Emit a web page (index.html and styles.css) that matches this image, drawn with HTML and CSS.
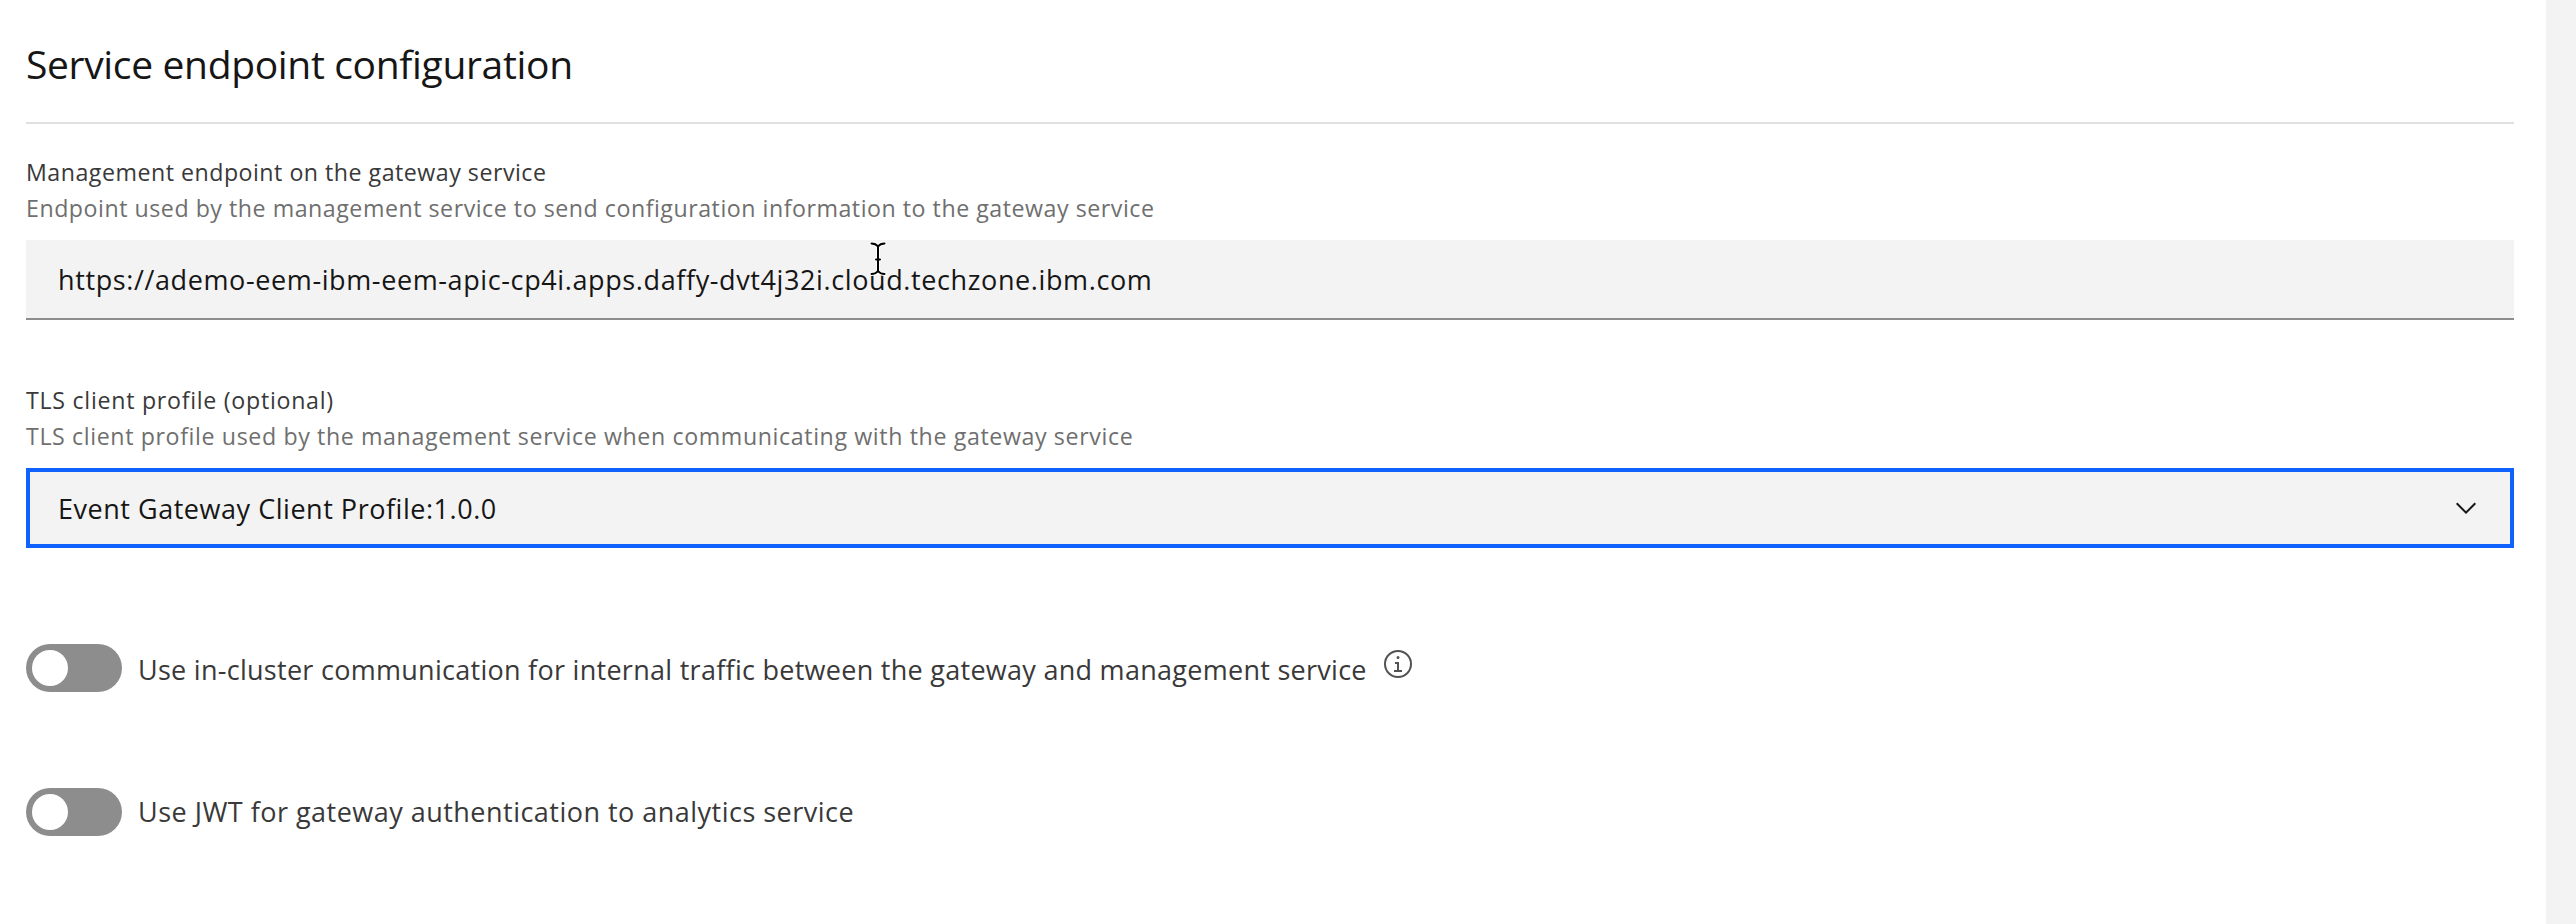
FILE: index.html
```html
<!DOCTYPE html>
<html lang="en">
<head>
<meta charset="utf-8">
<title>Service endpoint configuration</title>
<link rel="stylesheet" href="styles.css">
</head>
<body>
<main class="panel">
  <h1 class="title">Service endpoint configuration</h1>
  <section class="field">
    <div class="label label-endpoint">Management endpoint on the gateway service</div>
    <div class="helper helper-endpoint">Endpoint used by the management service to send configuration information to the gateway service</div>
    <div class="control input">
      <span class="value value-url">https://ademo-eem-ibm-eem-apic-cp4i.apps.daffy-dvt4j32i.cloud.techzone.ibm.com</span>
      <svg class="cursor" width="20" height="36" viewBox="0 0 20 36" fill="none" stroke-linecap="round">
        <path d="M3.500 3.500C6.500 3.500 8.500 4.500 10 6.500C11.500 4.500 13.500 3.500 16.500 3.500M10 6.500V31M3.500 34C6.500 34 8.500 33 10 31C11.500 33 13.500 34 16.500 34M8 19.500H12" stroke="#fff" stroke-width="4"/>
        <path d="M3.500 3.500C6.500 3.500 8.500 4.500 10 6.500C11.500 4.500 13.500 3.500 16.500 3.500M10 6.500V31M3.500 34C6.500 34 8.500 33 10 31C11.500 33 13.500 34 16.500 34M8 19.500H12" stroke="#000" stroke-width="2"/>
      </svg>
    </div>
  </section>
  <section class="field">
    <div class="label label-tls">TLS client profile (optional)</div>
    <div class="helper helper-tls">TLS client profile used by the management service when communicating with the gateway service</div>
    <div class="control select">
      <span class="value">Event Gateway Client Profile:1.0.0</span>
      <svg class="chevron" width="32" height="32" viewBox="0 0 16 16" fill="#161616"><path d="M8 11L3 6 3.700 5.300 8 9.600 12.300 5.300 13 6z"/></svg>
    </div>
  </section>
  <div class="toggles">
    <div class="toggle-row">
      <span class="toggle"></span>
      <span class="toggle-text toggle-cluster">Use in-cluster communication for internal traffic between the gateway and management service</span>
      <svg class="info" width="32" height="32" viewBox="0 0 32 32" fill="#525252"><path d="M17 22V14H13v2h2v6H12v2h8V22zM16 8a1.500 1.500 0 1 0 1.500 1.500A1.500 1.500 0 0 0 16 8z"/><path d="M16 30A14 14 0 1 1 30 16 14 14 0 0 1 16 30zM16 4A12 12 0 1 0 28 16 12 12 0 0 0 16 4z"/></svg>
    </div>
    <div class="toggle-row">
      <span class="toggle"></span>
      <span class="toggle-text toggle-jwt">Use JWT for gateway authentication to analytics service</span>
    </div>
  </div>
</main>
</body>
</html>
```
FILE: styles.css
```css
* { box-sizing: border-box; }

body {
  margin: 0;
  height: 924px;
  overflow: hidden;
  background: #f3f3f3;
  font-family: "Open Sans", sans-serif;
  white-space: nowrap;
}

.panel {
  width: 2546px;
  height: 924px;
  padding: 38px 32px 0 26px;
  background: #fff;
}

.title {
  margin: 0;
  height: 86px;
  border-bottom: 2px solid #e0e0e0;
  color: #161616;
  font-size: 39px;
  font-weight: 400;
  line-height: 52px;
  letter-spacing: -0.34px;
}

.field { padding-top: 30px; }
.field + .field { padding-top: 62px; }

.label,
.helper {
  height: 36px;
  font-size: 23.2px;
  line-height: 36px;
}
.label { color: #393939; }
.helper { color: #6f6f6f; }
.label-endpoint { letter-spacing: 0.5px; }
.helper-endpoint { letter-spacing: 0.525px; }
.label-tls { letter-spacing: 0.72px; }
.helper-tls { letter-spacing: 0.615px; }

.control {
  position: relative;
  display: flex;
  align-items: center;
  justify-content: space-between;
  height: 80px;
  margin-top: 14px;
  background: #f3f3f3;
  color: #161616;
  font-size: 27px;
  letter-spacing: 0.53px;
}
.input {
  padding: 0 32px;
  border-bottom: 2px solid #8d8d8d;
}
.select {
  padding: 0 28px;
  border: 4px solid #0f62fe;
}
.value-url { letter-spacing: 0.61px; }

.cursor {
  position: absolute;
  left: 842px;
  top: 0;
}

.toggles {
  display: flex;
  flex-direction: column;
  gap: 96px;
  padding-top: 96px;
}
.toggle-row {
  display: flex;
  align-items: center;
  height: 48px;
}
.toggle {
  width: 96px;
  height: 48px;
  padding: 6px;
  border-radius: 24px;
  background: #8d8d8d;
}
.toggle::before {
  content: "";
  display: block;
  width: 36px;
  height: 36px;
  border-radius: 50%;
  background: #fff;
}
.toggle-text {
  margin-left: 16px;
  color: #393939;
  font-size: 27px;
  line-height: 36px;
}
.toggle-cluster { padding-top: 3px; letter-spacing: 0.277px; }
.toggle-jwt { letter-spacing: 0.48px; }
.info { margin: 0 0 8px 15px; }
```
